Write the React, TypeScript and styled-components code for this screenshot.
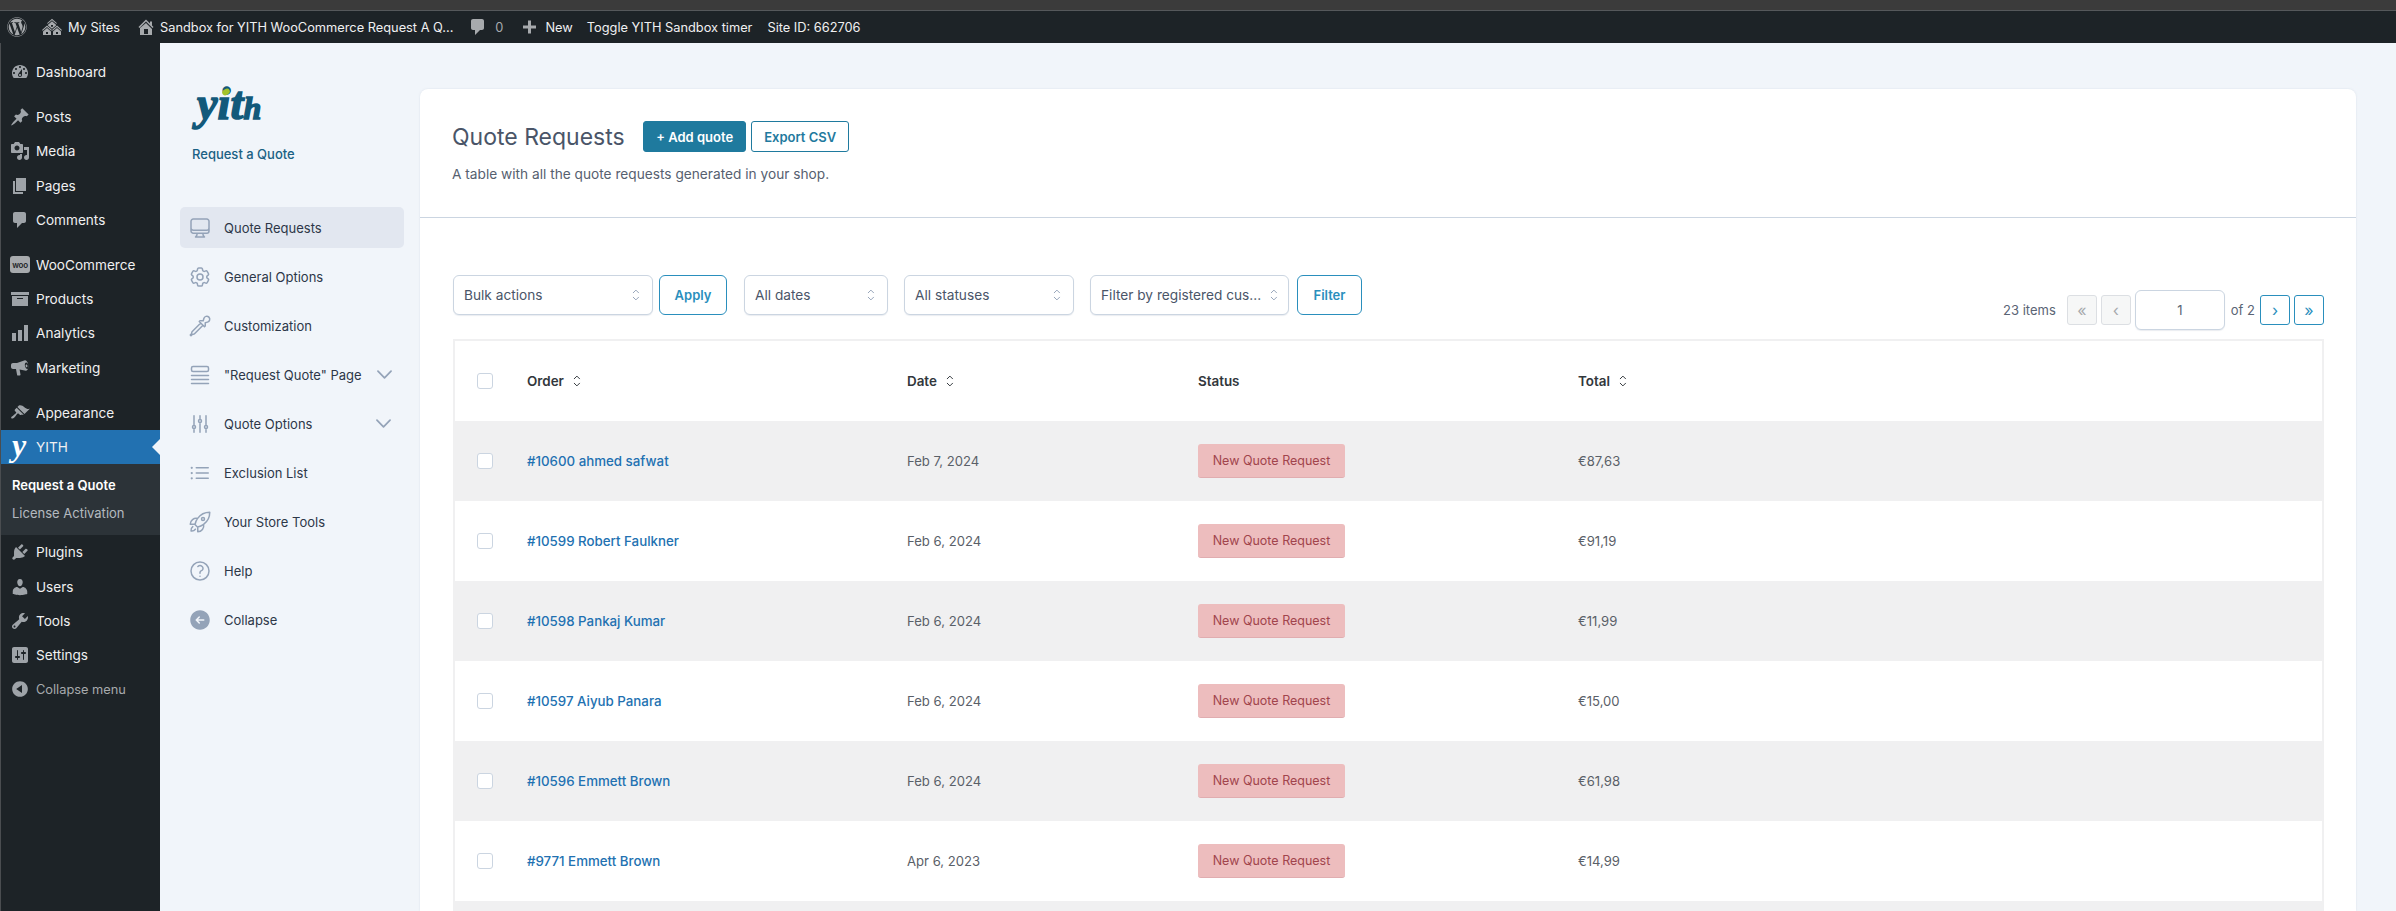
import React from 'react';
import styled, { createGlobalStyle } from 'styled-components';
import { FaWordpress } from 'react-icons/fa';
import {
  HiArrowLeftCircle,
  HiOutlineAdjustmentsVertical,
  HiOutlineChevronDown,
  HiOutlineCog6Tooth,
  HiOutlineComputerDesktop,
  HiOutlineEyeDropper,
  HiOutlineListBullet,
  HiOutlineQuestionMarkCircle,
  HiOutlineRocketLaunch,
} from 'react-icons/hi2';

const FONT = 'Inter, "Liberation Sans", sans-serif';

const GlobalStyle = createGlobalStyle`
  html, body {
    margin: 0;
    padding: 0;
    height: 100%;
    overflow: hidden;
    background: #f1f5fa;
    font-family: ${FONT};
  }
  * { box-sizing: border-box; }
`;

// dashicons, 20x20
const PATHS: Record<string, string> = {
  dashboard:
    'M3.76 16h12.48c1.1-1.37 1.76-3.11 1.76-5 0-4.42-3.58-8-8-8s-8 3.58-8 8c0 1.89.66 3.63 1.76 5zM10 4c.55 0 1 .45 1 1s-.45 1-1 1-1-.45-1-1 .45-1 1-1zM6 6c.55 0 1 .45 1 1s-.45 1-1 1-1-.45-1-1 .45-1 1-1zm8 0c.55 0 1 .45 1 1s-.45 1-1 1-1-.45-1-1 .45-1 1-1zm-5.37 5.55L12 7v6c0 1.1-.9 2-2 2s-2-.9-2-2c0-.57.24-1.08.63-1.45zM4 10c.55 0 1 .45 1 1s-.45 1-1 1-1-.45-1-1 .45-1 1-1zm12 0c.55 0 1 .45 1 1s-.45 1-1 1-1-.45-1-1 .45-1 1-1zm-5 3c0-.55-.45-1-1-1s-1 .45-1 1 .45 1 1 1 1-.45 1-1z',
  posts:
    'M10.44 3.02l1.82-1.82 6.36 6.35-1.83 1.82c-1.05-.68-2.48-.57-3.41.36l-.75.75c-.92.93-1.04 2.35-.35 3.41l-1.83 1.82-2.41-2.41-2.8 2.79c-.42.42-3.38 2.71-3.8 2.29s1.86-3.39 2.28-3.81l2.79-2.79L4.1 9.36l1.83-1.82c1.05.69 2.48.57 3.4-.36l.75-.75c.93-.92 1.05-2.35.36-3.41z',
  media:
    'M13 11V4c0-.55-.45-1-1-1h-1.67L9 1H5L3.67 3H2c-.55 0-1 .45-1 1v7c0 .55.45 1 1 1h10c.55 0 1-.45 1-1zM7 4.5c1.38 0 2.5 1.12 2.5 2.5S8.38 9.5 7 9.5 4.5 8.38 4.5 7 5.62 4.5 7 4.5zM14 6h5v10.5c0 1.38-1.12 2.5-2.5 2.5S14 17.88 14 16.5s1.12-2.5 2.5-2.5c.17 0 .34.02.5.05V9h-3V6zm-4 8.05V13h2v3.5c0 1.38-1.12 2.5-2.5 2.5S7 17.88 7 16.5 8.12 14 9.5 14c.17 0 .34.02.5.05z',
  pages: 'M6 15V2h10v13H6zm-1 1h8v2H3V5h2v11z',
  comments:
    'M5 2h9c1.1 0 2 .9 2 2v7c0 1.1-.9 2-2 2h-2l-5 5v-5H5c-1.1 0-2-.9-2-2V4c0-1.1.9-2 2-2z',
  products: 'M19 3v3H1V3h18zM2 7h16v10H2V7zm11 3V9H7v1h6z',
  analytics: 'M18 18V2h-4v16h4zm-6 0V7H8v11h4zm-6 0v-8H2v8h4z',
  marketing:
    'M18.15 5.94c.46 1.62.38 3.22-.02 4.48-.4 1.24-1.2 2.1-2.15 2.27L15.9 12.7 9.6 11.5l.9 5.1c.1.5-.2.9-.7.9H7.9c-.4 0-.7-.3-.8-.6L6 11H3c-1.1 0-2-.9-2-2V7c0-1.1.9-2 2-2h4l7.9-2.7c1.3-.1 2.6 1.5 3.25 3.64zM16 4.5c-1 .3-1.4 2-1 3.8.5 1.8 1.7 3 2.6 2.6.9-.3 1.3-2 .8-3.8-.5-1.7-1.5-2.9-2.4-2.6zm.2 2c.6-.2 1 .3 1.2 1.1.2.8 0 1.5-.5 1.7-.6.2-1-.3-1.2-1.1-.2-.8 0-1.5.5-1.7z',
  appearance:
    'M14.48 11.06L7.41 3.99l1.5-1.5c.5-.56 2.3-.47 3.51.32 1.21.8 1.43 1.28 2.91 2.1 1.18.64 2.45 1.26 4.45.85zm-.71.71L6.7 4.7 4.93 6.47c-.39.39-.39 1.02 0 1.41l1.06 1.06c.39.39.39 1.03 0 1.42-.6.6-1.43 1.11-2.21 1.69-.35.26-.7.53-1.01.84C1.43 13.23.76 14.7 1.37 15.3c.61.61 2.09-.04 3.43-1.39.31-.31.58-.66.85-1.02.57-.78 1.08-1.61 1.69-2.21.39-.39 1.02-.39 1.41 0l1.06 1.06c.39.39 1.02.39 1.41 0z',
  plugins:
    'M13.11 4.36L9.87 7.6 8 5.73l3.24-3.24c.35-.34 1.05-.2 1.56.32.52.51.66 1.21.31 1.55zm-8 1.77l.91-1.12 9.01 9.01-1.19.84c-.71.71-2.63 1.16-3.82 1.16H6.14L4.9 17.26c-.59.59-1.54.59-2.12 0-.59-.58-.59-1.53 0-2.12l1.24-1.24v-3.88c0-1.13.4-3.19 1.09-3.89zm7.26 3.97l3.24-3.24c.34-.35 1.04-.21 1.55.31.52.51.66 1.21.31 1.55l-3.24 3.25z',
  users:
    'M10 9.25c-2.27 0-2.73-3.44-2.73-3.44C7 4.02 7.82 2 9.97 2c2.16 0 2.98 2.02 2.71 3.81 0 0-.41 3.44-2.68 3.44zm0 2.57L12.72 10c2.39 0 4.52 2.33 4.52 4.53v2.49s-3.65 1.13-7.24 1.13c-3.65 0-7.24-1.13-7.24-1.13v-2.49c0-2.25 1.94-4.48 4.47-4.48z',
  tools:
    'M16.68 9.77c-1.34 1.34-3.3 1.67-4.95.99l-5.41 6.52c-.99.99-2.59.99-3.58 0s-.99-2.59 0-3.57l6.52-5.42c-.68-1.65-.35-3.61.99-4.95 1.28-1.28 3.12-1.62 4.72-1.06l-2.89 2.89 2.82 2.82 2.86-2.87c.53 1.58.18 3.39-1.08 4.65zM3.81 16.21c.4.39 1.04.39 1.43 0 .4-.4.4-1.04 0-1.43-.39-.4-1.03-.4-1.43 0-.39.39-.39 1.03 0 1.43z',
  settings:
    'M18 16V4c0-1.1-.9-2-2-2H4c-1.1 0-2 .9-2 2v12c0 1.1.9 2 2 2h12c1.1 0 2-.9 2-2zM8 11h1c.55 0 1 .45 1 1s-.45 1-1 1H8v1.5c0 .28-.22.5-.5.5s-.5-.22-.5-.5V13H6c-.55 0-1-.45-1-1s.45-1 1-1h1V5.5c0-.28.22-.5.5-.5s.5.22.5.5V11zm5-2h-1c-.55 0-1-.45-1-1s.45-1 1-1h1V5.5c0-.28.22-.5.5-.5s.5.22.5.5V7h1c.55 0 1 .45 1 1s-.45 1-1 1h-1v5.5c0 .28-.22.5-.5.5s-.5-.22-.5-.5V9z',
  collapse:
    'M10 2.16c4.33 0 7.84 3.51 7.84 7.84s-3.51 7.84-7.84 7.84S2.16 14.33 2.16 10 5.71 2.16 10 2.16zm2 11.72V6.12L6.18 9.97z',
  sites:
    'M14.27 6.87L10 3.14 5.73 6.87 5 6.14l5-4.38 5 4.38zM14 8.42l-4.05 3.43L6 8.38v-.74l4-3.5 4 3.5v.78zM11 9.7V8H9v1.7h2zm-1.73 4.03L5 10 .73 13.73 0 13l5-4.38L10 13zm10 0L15 10l-4.27 3.73L10 13l5-4.38L20 13zM5 11l4 3.5V18H1v-3.5zm10 0l4 3.5V18h-8v-3.5zM6 17v-2H4v2h2zm10 0v-2h-2v2h2z',
  home: 'M16 8.5l1.53 1.53-1.06 1.06L10 4.62l-6.47 6.47-1.06-1.06L10 2.5l4 4v-2h2v4zm-6-2.46l6 5.99V18H4v-6.97zM12 17v-5H8v5h4z',
  plus: 'M17 8.5v3h-5v5H9v-5H4v-3h5v-5h3v5h5z',
};

const Dash = ({ name, size = 20 }: { name: string; size?: number }) => (
  <svg width={size} height={size} viewBox="0 0 20 20" fill="currentColor">
    <path d={PATHS[name]} />
  </svg>
);

const Page = styled.div`
  height: 100vh;
  display: flex;
  flex-direction: column;
  overflow: hidden;
`;

const TopStrip = styled.div`
  height: 11px;
  flex: none;
  background: #3b3b3b;
  border-bottom: 1px solid #55585b;
`;

const AdminBar = styled.div`
  height: 32px;
  flex: none;
  display: flex;
  align-items: center;
  background: #1d2327;
  color: #f0f0f1;
  font-size: 12.8px;
  padding-left: 7px;
`;

const BarItem = styled.span<{ $left?: number; $gap?: number }>`
  display: inline-flex;
  align-items: center;
  gap: ${(p) => p.$gap ?? 6}px;
  margin-left: ${(p) => p.$left ?? 0}px;
  white-space: nowrap;
  svg {
    color: #a7aaad;
    flex: none;
  }
`;

const BarCount = styled.span`
  color: #a7aaad;
  margin-left: 1px;
`;

const Body = styled.div`
  flex: 1;
  min-height: 0;
  display: flex;
`;

const WpMenu = styled.nav`
  width: 160px;
  flex: none;
  background: #1d2327;
  border-left: 1px solid #4a4d50;
  padding-top: 11.8px;
`;

const MenuItem = styled.div<{ $gap?: boolean; $active?: boolean; $dim?: boolean }>`
  position: relative;
  height: 34.3px;
  display: flex;
  align-items: center;
  margin-top: ${(p) => (p.$gap ? '10.7px' : '0')};
  background: ${(p) => (p.$active ? '#2271b1' : 'transparent')};
  color: ${(p) => (p.$dim ? '#a7aaad' : '#f0f0f1')};
  font-size: ${(p) => (p.$dim ? '12.8px' : '13.6px')};
  padding-left: 9px;
  ${(p) =>
    p.$active &&
    `&::after {
      content: '';
      position: absolute;
      right: 0;
      top: 50%;
      margin-top: -8px;
      border: 8px solid transparent;
      border-left: 0;
      border-right-color: #f1f5fa;
    }`}
`;

const MenuIcon = styled.span<{ $active?: boolean }>`
  width: 26px;
  flex: none;
  display: flex;
  align-items: center;
  color: ${(p) => (p.$active ? '#fff' : '#9ea3a8')};
`;

const YithLetter = styled.span`
  font-family: 'Liberation Serif', serif;
  font-style: italic;
  font-weight: 700;
  font-size: 32px;
  line-height: 20px;
  color: #fff;
  margin-left: 2px;
  margin-top: -4px;
`;

const WooBadge = styled.span`
  width: 20px;
  height: 17px;
  border-radius: 3px;
  background: #a7aaad;
  color: #1d2327;
  font-size: 8px;
  font-weight: 600;
  display: flex;
  align-items: center;
  justify-content: center;
  letter-spacing: -0.3px;
`;

const SubMenu = styled.div`
  height: 71px;
  background: #2c3338;
  padding: 7px 0 0 11px;
`;

const SubLink = styled.div<{ $current?: boolean }>`
  height: 28px;
  display: flex;
  align-items: center;
  font-size: 13px;
  font-weight: ${(p) => (p.$current ? 600 : 400)};
  color: ${(p) => (p.$current ? '#fff' : 'rgba(240,246,252,0.7)')};
`;

const YithPanel = styled.aside`
  width: 260px;
  flex: none;
  padding: 46px 16px 0 20px;
  background: #f1f5fa;
`;

const Brand = styled.div`
  padding-left: 12px;
  height: 118px;
`;

const Logo = styled.div`
  position: relative;
  height: 44px;
  width: 72px;
  padding-left: 5px;
  font-family: 'Liberation Serif', serif;
  font-style: italic;
  font-weight: 700;
  font-size: 46px;
  line-height: 29px;
  letter-spacing: 0.2px;
  color: #12597a;
  -webkit-text-stroke: 1.5px #12597a;
  small {
    font-size: 32px;
    letter-spacing: 0;
  }
  &::after {
    content: '';
    position: absolute;
    left: 30px;
    top: 0;
    width: 8px;
    height: 6px;
    border-radius: 50%;
    transform: rotate(-30deg);
    background: #a3c32a;
  }
`;

const BrandName = styled.div`
  margin-top: 13px;
  font-size: 13px;
  font-weight: 500;
  line-height: 16px;
  color: #1a6184;
`;

const NavRow = styled.div<{ $active?: boolean }>`
  height: 41px;
  margin-bottom: 8px;
  display: flex;
  align-items: center;
  padding: 0 10px 0 8px;
  gap: 12px;
  border-radius: 5px;
  background: ${(p) => (p.$active ? '#e2e7f0' : 'transparent')};
  color: #2d3748;
  font-size: 13px;
  font-weight: 400;
  white-space: nowrap;
  svg {
    width: 24px;
    height: 24px;
    color: #94a3b8;
    flex: none;
  }
`;

const NavChevron = styled.span`
  margin-left: auto;
  display: flex;
  svg {
    width: 21px;
    height: 21px;
    stroke-width: 2;
  }
`;

const Content = styled.main`
  flex: 1;
  min-width: 0;
  padding: 46px 40px 0 0;
`;

const Card = styled.section`
  height: 100%;
  background: #fff;
  border-radius: 8px 8px 0 0;
  box-shadow: 0 0 2px rgba(148, 163, 184, 0.25);
  overflow: hidden;
`;

const CardHeader = styled.header`
  height: 129px;
  padding: 32px 32px 0;
  border-bottom: 1px solid #cbd5e1;
`;

const TitleRow = styled.div`
  display: flex;
  align-items: center;
  gap: 5px;
  height: 31px;
`;

const Title = styled.h1`
  margin: 0 13.5px 0 0;
  font-size: 23px;
  font-weight: 400;
  color: #4a5568;
`;

const HeaderButton = styled.a<{ $solid?: boolean }>`
  height: 31px;
  padding: 0 12px;
  display: flex;
  align-items: center;
  border: 1px solid #1f7a9e;
  border-radius: 3px;
  background: ${(p) => (p.$solid ? '#1f7a9e' : '#fff')};
  color: ${(p) => (p.$solid ? '#fff' : '#1f7a9e')};
  font-size: 13px;
  font-weight: 600;
`;

const Description = styled.p`
  margin: 14px 0 0;
  font-size: 13.7px;
  line-height: 16px;
  color: #56606f;
`;

const CardBody = styled.div`
  padding: 57px 32px 0 33px;
`;

const Toolbar = styled.div`
  display: flex;
  justify-content: space-between;
  margin-bottom: 9px;
`;

const Filters = styled.div`
  display: flex;
  align-items: flex-start;
`;

const Select = styled.div<{ $width: number; $gap?: number; $squeezed?: boolean }>`
  width: ${(p) => p.$width}px;
  height: 40px;
  margin-left: ${(p) => p.$gap ?? 0}px;
  padding: ${(p) => (p.$squeezed ? '0 9px 0 10px' : '0 11px 0 10px')};
  display: flex;
  align-items: center;
  justify-content: space-between;
  gap: 4px;
  background: #fff;
  border: 1px solid #cbd5e1;
  border-radius: 6px;
  box-shadow: 0 1px 1px rgba(148, 163, 184, 0.2);
  color: #4a5568;
  font-size: 13.7px;
  white-space: nowrap;
`;

const OutlineButton = styled.a<{ $width: number; $gap: number }>`
  width: ${(p) => p.$width}px;
  height: 40px;
  margin-left: ${(p) => p.$gap}px;
  display: flex;
  align-items: center;
  justify-content: center;
  background: #fff;
  border: 1px solid #2a8fbd;
  border-radius: 6px;
  color: #2a8fbd;
  font-size: 13px;
  font-weight: 600;
`;

const Pager = styled.div`
  align-self: flex-end;
  display: flex;
  align-items: center;
  height: 40px;
  margin-top: 15px;
  color: #5a6474;
  font-size: 13px;
`;

const PagerCount = styled.span`
  margin-right: 11px;
`;

const PageButton = styled.span<{ $off?: boolean }>`
  width: 30px;
  height: 30px;
  margin-right: 4px;
  display: flex;
  align-items: center;
  justify-content: center;
  border-radius: 3px;
  border: 1px solid ${(p) => (p.$off ? '#dcdfe3' : '#2a8fbd')};
  background: ${(p) => (p.$off ? '#f6f7f7' : '#fff')};
  color: ${(p) => (p.$off ? '#a7aaad' : '#2a8fbd')};
  font-size: 16px;
  line-height: 1;
  &:last-child {
    margin-right: 0;
  }
`;

const PageInput = styled.span`
  width: 90px;
  height: 40px;
  display: flex;
  align-items: center;
  justify-content: center;
  background: #fff;
  border: 1px solid #cbd5e1;
  border-radius: 6px;
  box-shadow: 0 1px 1px rgba(148, 163, 184, 0.2);
`;

const PageOf = styled.span`
  margin: 0 5px 0 6px;
`;

const TableBox = styled.div`
  border: 2px solid #f0f0f1;
  border-bottom: 0;
`;

const Table = styled.table`
  width: 100%;
  border-collapse: collapse;
  table-layout: fixed;
  font-size: 13.1px;
`;

const Col = styled.col<{ $width?: number }>`
  width: ${(p) => (p.$width ? `${p.$width}px` : 'auto')};
`;

const HeadCell = styled.th`
  height: 80px;
  padding: 0;
  text-align: left;
  font-weight: 600;
  color: #32373c;
  font-size: 13.4px;
`;

const HeadInner = styled.span`
  display: inline-flex;
  align-items: center;
  gap: 8px;
`;

const Row = styled.tr<{ $odd: boolean }>`
  background: ${(p) => (p.$odd ? '#f0f0f1' : '#fff')};
`;

const Cell = styled.td`
  height: 80px;
  padding: 0;
  color: #5a6068;
`;

const CheckCell = styled.span`
  display: block;
  width: 16px;
  height: 16px;
  margin-left: 22px;
  background: #fff;
  border: 1px solid #cbd5e1;
  border-radius: 3px;
`;

const OrderLink = styled.a`
  color: #2271b1;
  font-weight: 500;
  font-size: 13.3px;
`;

const StatusPill = styled.span`
  display: inline-flex;
  align-items: center;
  justify-content: center;
  width: 147px;
  height: 34px;
  border-radius: 3px;
  background: #edbdbe;
  border-bottom: 1px solid #e0adb0;
  color: #a1444c;
  font-size: 12.5px;
`;

const UpDown = ({ size = 14 }: { size?: number }) => (
  <svg width={size * 0.7} height={size} viewBox="0 0 10 14" fill="none" stroke="currentColor" strokeWidth="1">
    <path d="M2 5l3-3 3 3M2 9l3 3 3-3" />
  </svg>
);

const SelectArrows = styled.span`
  display: flex;
  color: #94a3b8;
`;

const RowsIcon = () => (
  <svg viewBox="0 0 24 24" fill="none" stroke="currentColor" strokeWidth="1.5" strokeLinecap="round">
    <rect x="3.5" y="3.5" width="17" height="5" rx="1.5" />
    <path d="M3.5 12.5h17M3.5 16.5h17M3.5 20.5h17" />
  </svg>
);

const wpMenuTop = [
  { icon: 'dashboard', label: 'Dashboard' },
  { icon: 'posts', label: 'Posts', gap: true },
  { icon: 'media', label: 'Media' },
  { icon: 'pages', label: 'Pages' },
  { icon: 'comments', label: 'Comments' },
  { icon: 'woo', label: 'WooCommerce', gap: true },
  { icon: 'products', label: 'Products' },
  { icon: 'analytics', label: 'Analytics' },
  { icon: 'marketing', label: 'Marketing' },
  { icon: 'appearance', label: 'Appearance', gap: true },
];

const wpMenuBottom = [
  { icon: 'plugins', label: 'Plugins' },
  { icon: 'users', label: 'Users' },
  { icon: 'tools', label: 'Tools' },
  { icon: 'settings', label: 'Settings' },
  { icon: 'collapse', label: 'Collapse menu', dim: true },
];

const yithNav = [
  { icon: <HiOutlineComputerDesktop />, label: 'Quote Requests', active: true },
  { icon: <HiOutlineCog6Tooth />, label: 'General Options' },
  { icon: <HiOutlineEyeDropper />, label: 'Customization' },
  { icon: <RowsIcon />, label: '"Request Quote" Page', more: true },
  { icon: <HiOutlineAdjustmentsVertical />, label: 'Quote Options', more: true },
  { icon: <HiOutlineListBullet />, label: 'Exclusion List' },
  { icon: <HiOutlineRocketLaunch />, label: 'Your Store Tools' },
  { icon: <HiOutlineQuestionMarkCircle />, label: 'Help' },
  { icon: <HiArrowLeftCircle />, label: 'Collapse' },
];

const quotes = [
  { order: '#10600 ahmed safwat', date: 'Feb 7, 2024', total: '€87,63' },
  { order: '#10599 Robert Faulkner', date: 'Feb 6, 2024', total: '€91,19' },
  { order: '#10598 Pankaj Kumar', date: 'Feb 6, 2024', total: '€11,99' },
  { order: '#10597 Aiyub Panara', date: 'Feb 6, 2024', total: '€15,00' },
  { order: '#10596 Emmett Brown', date: 'Feb 6, 2024', total: '€61,98' },
  { order: '#9771 Emmett Brown', date: 'Apr 6, 2023', total: '€14,99' },
  { order: '', date: '', total: '' },
];

const App = () => (
  <Page>
    <GlobalStyle />
    <TopStrip />
    <AdminBar>
      <BarItem>
        <FaWordpress size={20} />
      </BarItem>
      <BarItem $left={15}>
        <Dash name="sites" />
        My Sites
      </BarItem>
      <BarItem $left={16} $gap={4}>
        <Dash name="home" />
        Sandbox for YITH WooCommerce Request A Q...
      </BarItem>
      <BarItem $left={15}>
        <Dash name="comments" />
        <BarCount>0</BarCount>
      </BarItem>
      <BarItem $left={16}>
        <Dash name="plus" />
        New
      </BarItem>
      <BarItem $left={14}>Toggle YITH Sandbox timer</BarItem>
      <BarItem $left={15}>Site ID: 662706</BarItem>
    </AdminBar>
    <Body>
      <WpMenu>
        {wpMenuTop.map((m) => (
          <MenuItem key={m.label} $gap={m.gap}>
            <MenuIcon>{m.icon === 'woo' ? <WooBadge>woo</WooBadge> : <Dash name={m.icon} />}</MenuIcon>
            {m.label}
          </MenuItem>
        ))}
        <MenuItem $active>
          <MenuIcon $active>
            <YithLetter>y</YithLetter>
          </MenuIcon>
          YITH
        </MenuItem>
        <SubMenu>
          <SubLink $current>Request a Quote</SubLink>
          <SubLink>License Activation</SubLink>
        </SubMenu>
        {wpMenuBottom.map((m) => (
          <MenuItem key={m.label} $dim={m.dim}>
            <MenuIcon>
              <Dash name={m.icon} />
            </MenuIcon>
            {m.label}
          </MenuItem>
        ))}
      </WpMenu>
      <YithPanel>
        <Brand>
          <Logo>
            yit<small>h</small>
          </Logo>
          <BrandName>Request a Quote</BrandName>
        </Brand>
        {yithNav.map((n) => (
          <NavRow key={n.label} $active={n.active}>
            {n.icon}
            {n.label}
            {n.more && (
              <NavChevron>
                <HiOutlineChevronDown />
              </NavChevron>
            )}
          </NavRow>
        ))}
      </YithPanel>
      <Content>
        <Card>
          <CardHeader>
            <TitleRow>
              <Title>Quote Requests</Title>
              <HeaderButton $solid>+ Add quote</HeaderButton>
              <HeaderButton>Export CSV</HeaderButton>
            </TitleRow>
            <Description>A table with all the quote requests generated in your shop.</Description>
          </CardHeader>
          <CardBody>
            <Toolbar>
              <Filters>
                <Select $width={200}>
                  Bulk actions
                  <SelectArrows>
                    <UpDown />
                  </SelectArrows>
                </Select>
                <OutlineButton $width={68} $gap={6}>
                  Apply
                </OutlineButton>
                <Select $width={144} $gap={17}>
                  All dates
                  <SelectArrows>
                    <UpDown />
                  </SelectArrows>
                </Select>
                <Select $width={170} $gap={16}>
                  All statuses
                  <SelectArrows>
                    <UpDown />
                  </SelectArrows>
                </Select>
                <Select $width={199} $gap={16} $squeezed>
                  Filter by registered cus...
                  <SelectArrows>
                    <UpDown />
                  </SelectArrows>
                </Select>
                <OutlineButton $width={65} $gap={8}>
                  Filter
                </OutlineButton>
              </Filters>
              <Pager>
                <PagerCount>23 items</PagerCount>
                <PageButton $off>«</PageButton>
                <PageButton $off>‹</PageButton>
                <PageInput>1</PageInput>
                <PageOf>of 2</PageOf>
                <PageButton>›</PageButton>
                <PageButton>»</PageButton>
              </Pager>
            </Toolbar>
            <TableBox>
              <Table>
                <colgroup>
                  <Col $width={72} />
                  <Col $width={380} />
                  <Col $width={291} />
                  <Col $width={380} />
                  <Col />
                </colgroup>
                <thead>
                  <tr>
                    <HeadCell>
                      <CheckCell />
                    </HeadCell>
                    <HeadCell>
                      <HeadInner>
                        Order <UpDown size={14} />
                      </HeadInner>
                    </HeadCell>
                    <HeadCell>
                      <HeadInner>
                        Date <UpDown size={14} />
                      </HeadInner>
                    </HeadCell>
                    <HeadCell>Status</HeadCell>
                    <HeadCell>
                      <HeadInner>
                        Total <UpDown size={14} />
                      </HeadInner>
                    </HeadCell>
                  </tr>
                </thead>
                <tbody>
                  {quotes.map((q, i) => (
                    <Row key={i} $odd={i % 2 === 0}>
                      <Cell>{q.order && <CheckCell />}</Cell>
                      <Cell>
                        <OrderLink>{q.order}</OrderLink>
                      </Cell>
                      <Cell>{q.date}</Cell>
                      <Cell>{q.order && <StatusPill>New Quote Request</StatusPill>}</Cell>
                      <Cell>{q.total}</Cell>
                    </Row>
                  ))}
                </tbody>
              </Table>
            </TableBox>
          </CardBody>
        </Card>
      </Content>
    </Body>
  </Page>
);

export default App;
